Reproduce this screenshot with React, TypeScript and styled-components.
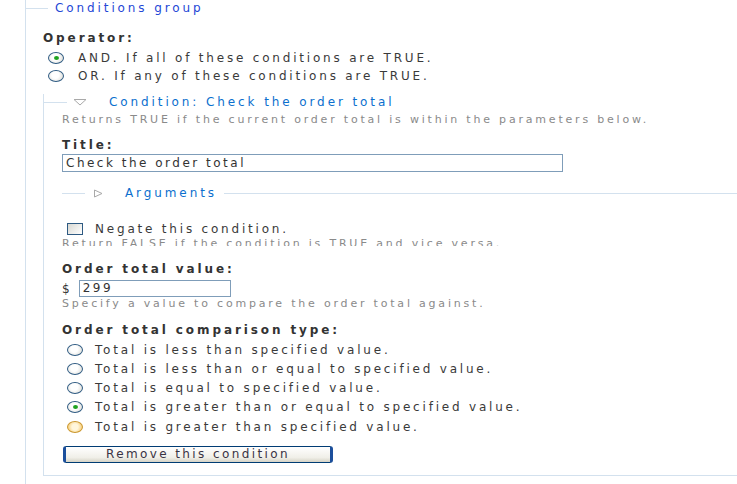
import styled, { createGlobalStyle } from 'styled-components';

const GlobalStyle = createGlobalStyle`
  body {
    margin: 0;
    background: #fff;
    font-family: 'DejaVu Sans', Verdana, sans-serif;
    font-size: 12px;
    color: #3a3a3a;
    overflow: hidden;
  }
`;

const Page = styled.div`
  width: 737px;
  height: 484px;
  overflow: hidden;
  padding-left: 25px;
  box-sizing: border-box;
`;

const Fieldset = styled.div`
  margin-top: 8px;
  border-left: 1px solid #d3e1ee;
  padding-left: 17px;
  height: 600px;
`;

const LegendRow = styled.div<{ $shift?: number }>`
  display: flex;
  align-items: center;
  height: 16px;
  margin: -8px 0 0 ${({ $shift }) => -($shift ?? 18)}px;
`;

const LegendLine = styled.span<{ $w?: number; $ml?: number }>`
  display: block;
  width: ${({ $w }) => ($w ? `${$w}px` : 'auto')};
  flex: ${({ $w }) => ($w ? 'none' : '1')};
  margin-left: ${({ $ml }) => $ml ?? 0}px;
  border-top: 1px solid #d3e1ee;
`;

const LegendText = styled.span<{ $color?: string; $ml?: number }>`
  color: ${({ $color }) => $color || '#0b6fce'};
  letter-spacing: 2.9px;
  margin-left: ${({ $ml }) => $ml ?? 0}px;
  white-space: nowrap;
`;

const Toggle = styled.svg<{ $ml: number }>`
  display: block;
  flex: none;
  margin-left: ${({ $ml }) => $ml}px;
`;

const Label = styled.div<{ $mt?: number }>`
  font-weight: bold;
  color: #333;
  letter-spacing: 2.9px;
  margin-top: ${({ $mt }) => $mt ?? 0}px;
  line-height: 18px;
  white-space: nowrap;
`;

const OptionRow = styled.div<{ $mt?: number; $h?: number }>`
  display: flex;
  align-items: center;
  height: ${({ $h }) => $h ?? 19}px;
  margin-top: ${({ $mt }) => $mt ?? 0}px;
  padding-left: 5px;
  letter-spacing: 2.8px;
  color: #3a3a3a;
  white-space: nowrap;
`;

const Radio = styled.span<{ $checked?: boolean; $hover?: boolean; $gap: number }>`
  position: relative;
  box-sizing: border-box;
  width: 16px;
  height: 12px;
  border-radius: 50%;
  border: 1px solid ${({ $hover }) => ($hover ? '#c9962e' : '#2e5a82')};
  background: ${({ $hover }) =>
    $hover
      ? 'radial-gradient(circle at 50% 50%, #fff6dc 35%, #f5c25a 100%)'
      : 'radial-gradient(circle at 45% 40%, #fff 35%, #d6d6cf 100%)'};
  margin-right: ${({ $gap }) => $gap}px;
  flex: none;

  &::after {
    content: '';
    display: ${({ $checked }) => ($checked ? 'block' : 'none')};
    position: absolute;
    left: 5px;
    top: 3px;
    width: 5px;
    height: 4px;
    border-radius: 50%;
    background: #1fa31f;
  }
`;

const Checkbox = styled.span`
  box-sizing: border-box;
  width: 16px;
  height: 12px;
  border: 1px solid #2e5a82;
  background: linear-gradient(135deg, #d8d8d2, #fff);
  margin-right: 12px;
  flex: none;
`;

const Inner = styled.div`
  margin-top: 17px;
  width: 800px;
  border-left: 1px solid #d3e1ee;
  border-bottom: 1px solid #d3e1ee;
  padding: 0 0 12px 18px;
  box-sizing: border-box;
`;

const Description = styled.div<{ $mt?: number; $clip?: number }>`
  font-size: 11px;
  color: #8a8a8a;
  letter-spacing: 2.8px;
  line-height: 14px;
  margin-top: ${({ $mt }) => $mt ?? 0}px;
  height: ${({ $clip }) => ($clip ? `${$clip}px` : 'auto')};
  overflow: hidden;
  white-space: nowrap;
`;

const TextInput = styled.div<{ $w: number; $h: number }>`
  width: ${({ $w }) => $w}px;
  height: ${({ $h }) => $h}px;
  box-sizing: border-box;
  border: 1px solid #7f9db9;
  padding: 0 3px;
  line-height: ${({ $h }) => $h - 2}px;
  letter-spacing: 2.5px;
  color: #333;
  white-space: nowrap;
`;

const Args = styled.div`
  margin-top: 13px;
  margin-bottom: 18px;
  padding-top: 8px;
`;

const InputRow = styled.div`
  display: flex;
  align-items: center;
  gap: 9px;
  margin-top: 2px;
  color: #333;
`;

const Button = styled.div`
  margin-top: 10px;
  margin-left: 1px;
  width: 270px;
  height: 17px;
  box-sizing: border-box;
  border: 1px solid #003c74;
  border-left: 3px solid #1c4f9c;
  border-right: 3px solid #1c4f9c;
  border-radius: 3px;
  background: linear-gradient(#fff, #f0efe8 70%, #d6d3c6);
  text-align: center;
  line-height: 14px;
  letter-spacing: 2.4px;
  color: #3a3344;
  white-space: nowrap;
`;

const DownArrow = () => (
  <Toggle $ml={6} width="14" height="8" viewBox="0 0 14 8">
    <path d="M1 1.5 H13 L7 7 Z" fill="#fff" stroke="#a9a9a9" strokeWidth="1" />
  </Toggle>
);

const RightArrow = () => (
  <Toggle $ml={8} width="10" height="9" viewBox="0 0 10 9">
    <path d="M1.5 1 V8 L9 4.5 Z" fill="#fff" stroke="#a9a9a9" strokeWidth="1" />
  </Toggle>
);

const App = () => {
  const types = [
    'Total is less than specified value.',
    'Total is less than or equal to specified value.',
    'Total is equal to specified value.',
    'Total is greater than or equal to specified value.',
    'Total is greater than specified value.',
  ];

  return (
    <Page>
      <GlobalStyle />
      <Fieldset>
        <LegendRow $shift={18}>
          <LegendLine $w={23} />
          <LegendText $color="#2447d6" $ml={7}>Conditions group</LegendText>
        </LegendRow>
        <Label $mt={13}>Operator:</Label>
        <OptionRow $mt={2} $h={18}>
          <Radio $checked $gap={14} />
          AND. If all of these conditions are TRUE.
        </OptionRow>
        <OptionRow $h={18}>
          <Radio $gap={14} />
          OR. If any of these conditions are TRUE.
        </OptionRow>

        <Inner>
          <LegendRow $shift={19}>
            <LegendLine $w={24} />
            <DownArrow />
            <LegendText $ml={22}>Condition: Check the order total</LegendText>
          </LegendRow>
          <Description $mt={3}>
            Returns TRUE if the current order total is within the parameters below.
          </Description>
          <Label $mt={9}>Title:</Label>
          <TextInput $w={501} $h={18}>Check the order total</TextInput>

          <Args>
            <LegendRow $shift={0}>
              <LegendLine $w={23} />
              <RightArrow />
              <LegendText $ml={22}>Arguments</LegendText>
              <LegendLine $ml={7} />
            </LegendRow>
          </Args>

          <OptionRow $h={19}>
            <Checkbox />
            Negate this condition.
          </OptionRow>
          <Description $mt={-1} $clip={9}>
            Return FALSE if the condition is TRUE and vice versa.
          </Description>

          <Label $mt={14}>Order total value:</Label>
          <InputRow>
            $<TextInput $w={152} $h={17}>299</TextInput>
          </InputRow>
          <Description>Specify a value to compare the order total against.</Description>

          <Label $mt={10}>Order total comparison type:</Label>
          {types.map((t, i) => (
            <OptionRow key={t} $mt={i === 0 ? 1 : 0} $h={19.25}>
              <Radio $checked={i === 3} $hover={i === 4} $gap={12} />
              {t}
            </OptionRow>
          ))}
          <Button>Remove this condition</Button>
        </Inner>
      </Fieldset>
    </Page>
  );
};

export default App;
